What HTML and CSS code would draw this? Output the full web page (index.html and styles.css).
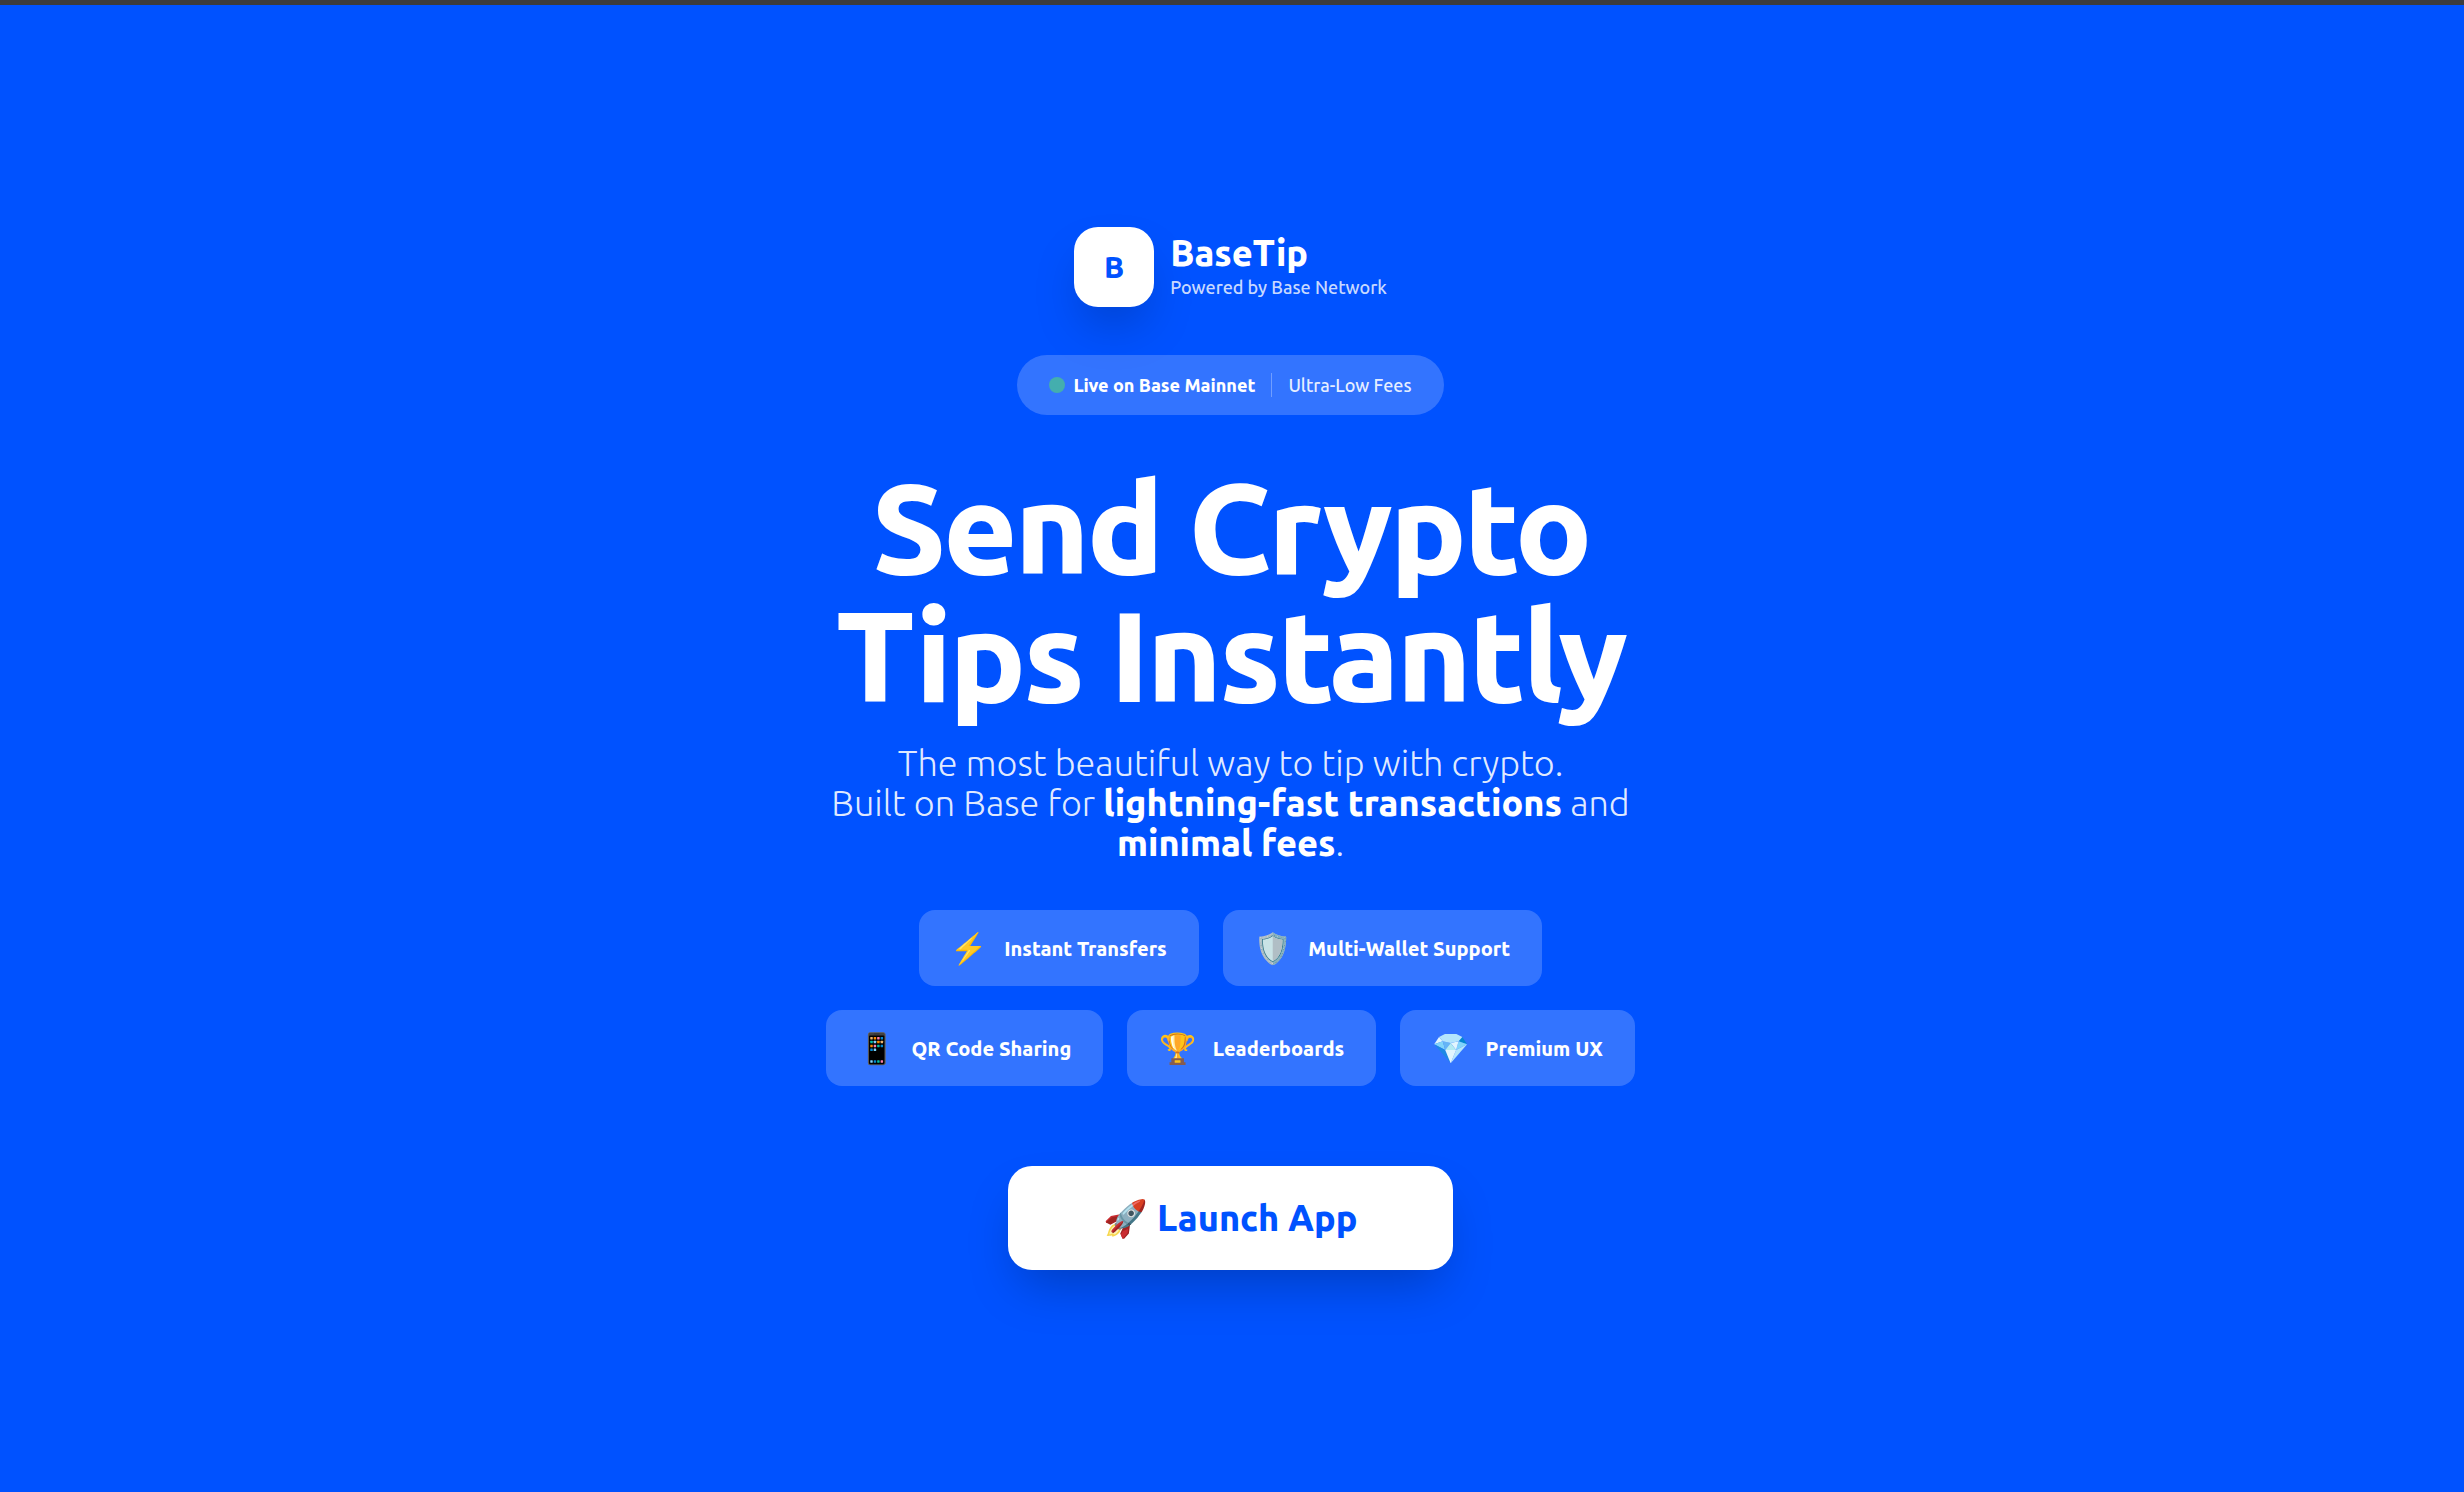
FILE: index.html
```html
<!DOCTYPE html>
<html lang="en">
<head>
<meta charset="utf-8">
<title>BaseTip</title>
<link rel="stylesheet" href="styles.css">
</head>
<body>
<div class="topbar"></div>
<main class="hero">
  <div class="brand">
    <div class="logo">B</div>
    <div class="brand-text">
      <div class="brand-name">BaseTip</div>
      <div class="brand-sub">Powered by Base Network</div>
    </div>
  </div>
  <div class="status">
    <span class="dot"></span>
    <span class="status-live">Live on Base Mainnet</span>
    <span class="divider"></span>
    <span class="status-fees">Ultra-Low Fees</span>
  </div>
  <h1 class="title">Send Crypto<br>Tips Instantly</h1>
  <p class="subtitle">The most beautiful way to tip with crypto.<br>Built on Base for <strong>lightning-fast transactions</strong> and <strong>minimal fees</strong>.</p>
  <div class="chips">
    <div class="chip"><span class="chip-icon">⚡</span><span>Instant Transfers</span></div>
    <div class="chip"><span class="chip-icon">🛡️</span><span>Multi-Wallet Support</span></div>
    <div class="chip"><span class="chip-icon">📱</span><span>QR Code Sharing</span></div>
    <div class="chip"><span class="chip-icon">🏆</span><span>Leaderboards</span></div>
    <div class="chip"><span class="chip-icon">💎</span><span>Premium UX</span></div>
  </div>
  <button class="launch">🚀 Launch App</button>
</main>
</body>
</html>
```
FILE: styles.css
```css
* { box-sizing: border-box; margin: 0; padding: 0; }
html, body { height: 100%; }
body {
  background: #0052ff;
  color: #fff;
  font-family: Ubuntu, "Open Sans", "Noto Sans", "Noto Color Emoji", sans-serif;
  overflow: hidden;
}
.topbar { height: 5px; background: #3c3c3c; }
.hero {
  width: 832px;
  margin-left: 814.5px;
  padding-top: 222px;
  display: flex;
  flex-direction: column;
  align-items: center;
  text-align: center;
}
.brand { display: flex; align-items: center; gap: 16px; margin-bottom: 48px; }
.logo {
  width: 80px; height: 80px;
  border-radius: 24px;
  background: #fff;
  color: #0052ff;
  display: flex; align-items: center; justify-content: center;
  font-size: 30px; font-weight: 900;
  box-shadow: 0 25px 50px -12px rgba(0,0,0,.25);
}
.brand-text { text-align: left; }
.brand-name { font-size: 36px; font-weight: 800; line-height: 40px; }
.brand-sub { font-size: 18px; line-height: 28px; color: rgba(255,255,255,.8); font-weight: 500; }
.status {
  display: flex; align-items: center;
  height: 60px;
  padding: 0 32px;
  border-radius: 30px;
  background: rgba(255,255,255,.2);
  font-size: 18px;
  margin-bottom: 48px;
}
.dot { width: 16px; height: 16px; border-radius: 50%; background: #44aeae; margin-right: 8px; }
.status-live { font-weight: 800; }
.divider { width: 1px; height: 24px; background: rgba(255,255,255,.3); margin: 0 16px; }
.status-fees { color: rgba(255,255,255,.9); font-weight: 500; }
.title { font-size: 128px; font-weight: 800; line-height: 128px; letter-spacing: -0.025em; margin-bottom: 24px; }
.subtitle { font-size: 36px; line-height: 40px; font-weight: 300; color: rgba(255,255,255,.9); margin-bottom: 47px; }
.subtitle strong { font-weight: 800; color: #fff; }
.chips { display: flex; flex-wrap: wrap; justify-content: center; gap: 24px; margin-bottom: 80px; }
.chip {
  display: flex; align-items: center; gap: 16px;
  height: 76px;
  padding: 0 32px;
  border-radius: 16px;
  background: rgba(255,255,255,.2);
  font-size: 20px; font-weight: 800;
}
.chip-icon { font-size: 30px; line-height: 36px; }
.launch {
  width: 445px; height: 104px;
  border: 0;
  border-radius: 24px;
  background: #fff;
  color: #0052ff;
  font-family: inherit;
  font-size: 36px; font-weight: 900;
  box-shadow: 0 25px 50px -12px rgba(0,0,0,.25);
}
```
